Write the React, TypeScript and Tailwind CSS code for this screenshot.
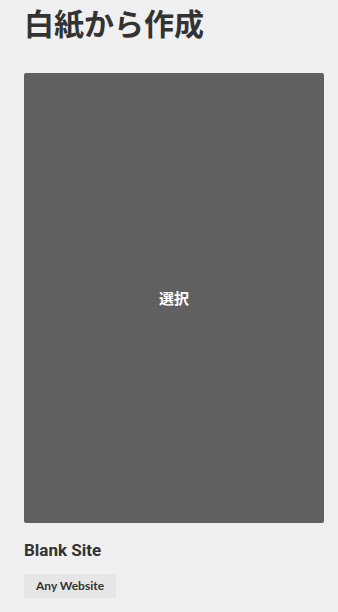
export default function App() {
  return (
    <div
      className="min-h-screen bg-[#f0f0f0] px-6 text-[#333]"
      style={{ fontFamily: 'Lato, "Noto Sans CJK JP", sans-serif' }}
    >
      <h1 className="pt-[3px] text-[30px] font-bold leading-[40px]">白紙から作成</h1>

      <div className="mt-[30px] flex h-[450px] w-[300px] items-center justify-center rounded-[2px] bg-[#606060]">
        <span className="text-[15px] font-bold text-white">選択</span>
      </div>

      <p className="mt-[17px] font-['Roboto',sans-serif] text-[17px] font-bold leading-5">Blank Site</p>

      <div className="mt-[14px] inline-flex h-[24px] items-center bg-[#e6e6e6] px-3 text-[12px] font-bold">
        Any Website
      </div>
    </div>
  );
}
